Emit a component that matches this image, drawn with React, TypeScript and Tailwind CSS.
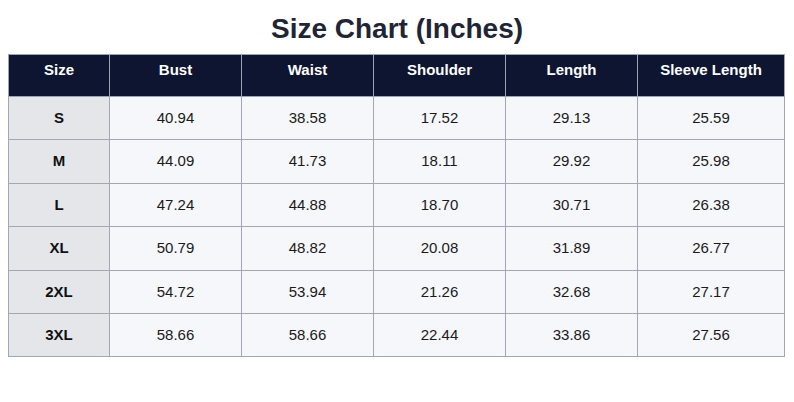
const headers = ['Size', 'Bust', 'Waist', 'Shoulder', 'Length', 'Sleeve Length'];

const rows = [
  ['S', '40.94', '38.58', '17.52', '29.13', '25.59'],
  ['M', '44.09', '41.73', '18.11', '29.92', '25.98'],
  ['L', '47.24', '44.88', '18.70', '30.71', '26.38'],
  ['XL', '50.79', '48.82', '20.08', '31.89', '26.77'],
  ['2XL', '54.72', '53.94', '21.26', '32.68', '27.17'],
  ['3XL', '58.66', '58.66', '22.44', '33.86', '27.56'],
];

const widths = ['w-[101px]', 'w-[132px]', 'w-[132px]', 'w-[132px]', 'w-[132px]', 'w-[147px]'];

export default function App() {
  return (
    <div
      className="w-[794px] h-[402px] bg-white pt-[12px] px-[8px]"
      style={{ fontFamily: '"Liberation Sans", Arial, sans-serif' }}
    >
      <h1 className="text-center text-[28px] leading-[34px] font-bold text-[#1f2535] mb-[8px]">
        Size Chart (Inches)
      </h1>
      <table className="w-[776px] border-collapse table-fixed">
        <thead>
          <tr className="h-[42px] bg-[#0e1530]">
            {headers.map((h, i) => (
              <th
                key={h}
                className={`${widths[i]} border border-[#9ea3b3] text-white text-[15px] leading-[17px] font-bold text-center align-top pt-[6px]`}
              >
                {h}
              </th>
            ))}
          </tr>
        </thead>
        <tbody>
          {rows.map((r) => (
            <tr key={r[0]} className="h-[43.4px]">
              {r.map((c, i) => (
                <td
                  key={i}
                  className={
                    i === 0
                      ? 'border border-[#a3a7b5] bg-[#e4e6ea] text-[15px] font-bold text-[#111] text-center'
                      : 'border border-[#a3a7b5] bg-[#f6f7fa] text-[15px] text-[#1a1a1a] text-center'
                  }
                >
                  {c}
                </td>
              ))}
            </tr>
          ))}
        </tbody>
      </table>
    </div>
  );
}
